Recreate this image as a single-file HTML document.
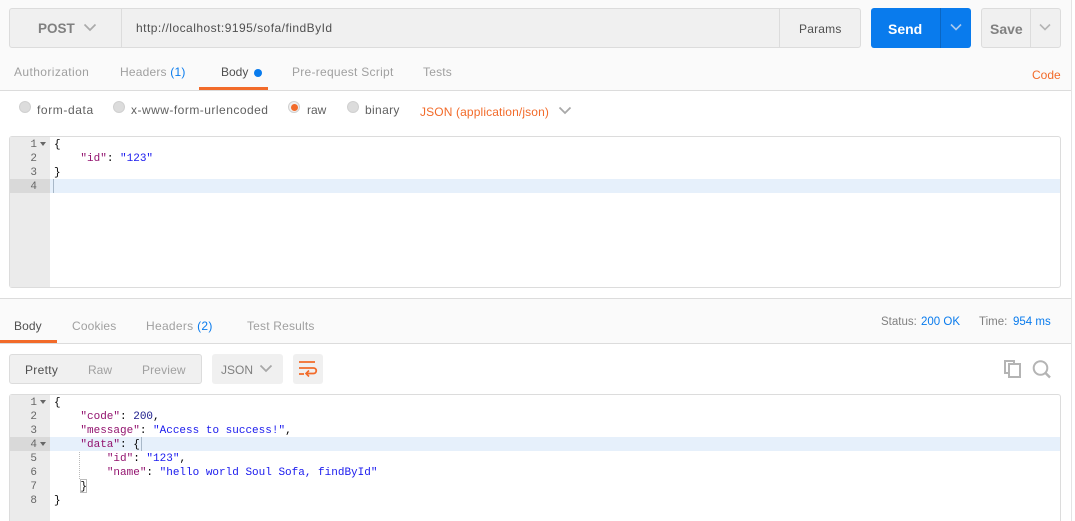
<!DOCTYPE html>
<html><head><meta charset="utf-8"><style>
html,body{margin:0;padding:0;background:#fff}
#p{position:relative;width:1075px;height:521px;overflow:hidden;background:#fff;font-family:"Liberation Sans",sans-serif;font-size:12px;color:#808080}
#p div,#p span.a,#p svg{position:absolute}
.t{white-space:nowrap;line-height:16px}
.m{font-family:"Liberation Mono",monospace;font-size:11px;line-height:14px;white-space:pre;color:#000}
.k{color:#92126e}.s{color:#1a1aee}.n{color:#1a1a8a}
.ln{font-family:"Liberation Mono",monospace;font-size:11px;line-height:14px;color:#666;width:27px;text-align:right;left:10px}
.b{color:#097bed}
.r{width:12px;height:12px;border-radius:50%;background:#dcdcdc;border:1px solid #d0d0d0;box-sizing:border-box}
</style></head><body><div id="p">
<div style="left:0;top:0;width:1071px;height:91px;background:#fafafa"></div>
<div style="left:0;top:90px;width:1071px;height:1px;background:#dcdcdc"></div>
<div style="left:1071px;top:0;width:1px;height:521px;background:#e4e4e4"></div>

<div style="left:9px;top:8px;width:852px;height:40px;background:#f0f0f0;border:1px solid #dcdcdc;border-radius:3px;box-sizing:border-box"></div>
<div style="left:121px;top:9px;width:1px;height:38px;background:#dcdcdc"></div>
<div style="left:779px;top:9px;width:1px;height:38px;background:#dcdcdc"></div>
<div class="t" style="left:38px;top:21px;font-size:13.5px;font-weight:bold;color:#808080">POST</div>
<svg style="left:83px;top:23px" width="14" height="10"><path d="M1.5 1.5L7 7L12.5 1.5" fill="none" stroke="#aaa" stroke-width="1.7"/></svg>
<div class="t" style="left:136px;top:20px;color:#505050;letter-spacing:.47px">http://localhost:9195/sofa/findById</div>
<div class="t" style="left:799px;top:21px;color:#505050;letter-spacing:.2px">Params</div>

<div style="left:871px;top:8px;width:100px;height:40px;background:#097bed;border-radius:3px"></div>
<div style="left:940px;top:8px;width:1px;height:40px;background:#0a66c2"></div>
<div class="t" style="left:888px;top:21px;font-size:14px;font-weight:bold;color:#fff">Send</div>
<svg style="left:949px;top:23px" width="14" height="9"><path d="M2 1.5L7 6.5L12 1.5" fill="none" stroke="#a9c9ee" stroke-width="1.6"/></svg>
<div style="left:981px;top:8px;width:80px;height:40px;background:#f0f0f0;border:1px solid #dcdcdc;border-radius:3px;box-sizing:border-box"></div>
<div style="left:1030px;top:9px;width:1px;height:38px;background:#dcdcdc"></div>
<div class="t" style="left:990px;top:21px;font-size:14px;font-weight:bold;color:#808080">Save</div>
<svg style="left:1038px;top:23px" width="14" height="9"><path d="M2 1.5L7 6.5L12 1.5" fill="none" stroke="#b4b4b4" stroke-width="1.6"/></svg>

<div class="t" style="left:14px;top:64px;color:#a0a0a0;letter-spacing:.4px">Authorization</div>
<div class="t" style="left:120px;top:64px;color:#a0a0a0;letter-spacing:.2px">Headers <span style="color:#097bed">(1)</span></div>
<div class="t" style="left:221px;top:64px;color:#505050">Body</div>
<div style="left:254px;top:69px;width:8px;height:8px;border-radius:50%;background:#097bed"></div>
<div style="left:199px;top:87px;width:69px;height:3px;background:#f26b2a"></div>
<div class="t" style="left:292px;top:64px;color:#a0a0a0;letter-spacing:.27px">Pre-request Script</div>
<div class="t" style="left:423px;top:64px;color:#a0a0a0;letter-spacing:.2px">Tests</div>
<div class="t" style="left:1032px;top:67px;color:#f26b2a">Code</div>

<div class="r" style="left:19px;top:101px"></div>
<div class="t" style="left:37px;top:102px;color:#606060;letter-spacing:.6px">form-data</div>
<div class="r" style="left:113px;top:101px"></div>
<div class="t" style="left:131px;top:102px;color:#606060;letter-spacing:.48px">x-www-form-urlencoded</div>
<div class="r" style="left:288px;top:101px;background:#f0f0f0"></div>
<div style="left:291px;top:104px;width:7px;height:7px;border-radius:50%;background:#f26b2a"></div>
<div class="t" style="left:307px;top:102px;color:#606060">raw</div>
<div class="r" style="left:347px;top:101px"></div>
<div class="t" style="left:365px;top:102px;color:#606060;letter-spacing:.35px">binary</div>
<div class="t" style="left:420px;top:104px;color:#f26b2a;letter-spacing:.13px">JSON (application/json)</div>
<svg style="left:558px;top:106px" width="14" height="10"><path d="M1.5 1.5L7 7L12.5 1.5" fill="none" stroke="#a8a8a8" stroke-width="1.8"/></svg>

<div style="left:9px;top:136px;width:1052px;height:152px;border:1px solid #dcdcdc;border-radius:3px;box-sizing:border-box;background:#fff"></div>
<div style="left:10px;top:137px;width:40px;height:150px;background:#ebebeb"></div>
<div style="left:50px;top:179px;width:1010px;height:14px;background:#e6f0fb"></div>
<div style="left:10px;top:179px;width:40px;height:14px;background:#d9d9d9"></div>
<div style="left:53px;top:179px;width:1px;height:14px;background:#a8b8c8"></div>
<div class="ln" style="top:138px">1<br>2<br>3<br>4</div>
<svg style="left:40px;top:142px" width="7" height="5"><path d="M0 0H6L3 4Z" fill="#666"/></svg>
<div class="m" style="left:54px;top:138px">{
    <span class="k">"id"</span>: <span class="s">"123"</span>
}</div>

<div style="left:0;top:298px;width:1071px;height:1px;background:#dcdcdc"></div>
<div style="left:0;top:299px;width:1071px;height:44px;background:#fafafa"></div>
<div style="left:0;top:343px;width:1071px;height:1px;background:#dcdcdc"></div>
<div style="left:0;top:340px;width:57px;height:3px;background:#f26b2a"></div>
<div class="t" style="left:14px;top:318px;color:#505050;letter-spacing:.1px">Body</div>
<div class="t" style="left:72px;top:318px;color:#a0a0a0;letter-spacing:.15px">Cookies</div>
<div class="t" style="left:146px;top:318px;color:#a0a0a0;letter-spacing:.3px">Headers <span style="color:#097bed">(2)</span></div>
<div class="t" style="left:247px;top:318px;color:#a0a0a0;letter-spacing:.18px">Test Results</div>
<div class="t" style="left:881px;top:314px;font-size:11.5px;color:#808080">Status:</div>
<div class="t" style="left:921px;top:314px;font-size:11.5px;color:#097bed">200 OK</div>
<div class="t" style="left:979px;top:314px;font-size:11.5px;color:#808080">Time:</div>
<div class="t" style="left:1013px;top:314px;font-size:11.5px;color:#097bed">954 ms</div>

<div style="left:9px;top:354px;width:193px;height:30px;background:#f0f0f0;border:1px solid #dcdcdc;border-radius:3px;box-sizing:border-box"></div>
<div class="t" style="left:25px;top:362px;color:#505050;letter-spacing:.3px">Pretty</div>
<div class="t" style="left:88px;top:362px;color:#a0a0a0">Raw</div>
<div class="t" style="left:142px;top:362px;color:#a0a0a0;letter-spacing:.15px">Preview</div>
<div style="left:212px;top:354px;width:71px;height:30px;background:#f0f0f0;border-radius:3px"></div>
<div class="t" style="left:221px;top:362px;color:#808080">JSON</div>
<svg style="left:259px;top:364px" width="14" height="10"><path d="M1.5 1.5L7 7L12.5 1.5" fill="none" stroke="#a8a8a8" stroke-width="1.8"/></svg>
<div style="left:293px;top:354px;width:30px;height:30px;background:#f0f0f0;border-radius:3px"></div>
<svg style="left:298px;top:360px" width="20" height="18"><path d="M1 2H17M1 8H15.5A2.7 2.7 0 0 1 15.5 13.5H9M1 14H6" fill="none" stroke="#f26b2a" stroke-width="1.8"/><path d="M11 10.5L8 13.5L11 16.5" fill="none" stroke="#f26b2a" stroke-width="1.6"/></svg>
<svg style="left:1003px;top:359px" width="18" height="19"><path d="M6 14H2V2H11V5" fill="none" stroke="#b4b4b4" stroke-width="2"/><rect x="6" y="5" width="11" height="13" fill="none" stroke="#b4b4b4" stroke-width="2"/></svg>
<svg style="left:1032px;top:359px" width="20" height="20"><circle cx="8.5" cy="9" r="6.8" fill="none" stroke="#b4b4b4" stroke-width="2"/><path d="M13.5 14L18 18.5" stroke="#b4b4b4" stroke-width="2.4"/></svg>

<div style="left:9px;top:394px;width:1052px;height:127px;border:1px solid #dcdcdc;border-bottom:0;border-radius:3px 3px 0 0;box-sizing:border-box;background:#fff"></div>
<div style="left:10px;top:395px;width:40px;height:126px;background:#ebebeb"></div>
<div style="left:50px;top:437px;width:1010px;height:14px;background:#e6f0fb"></div>
<div style="left:10px;top:437px;width:40px;height:14px;background:#d9d9d9"></div>
<div class="ln" style="top:396px">1<br>2<br>3<br>4<br>5<br>6<br>7<br>8</div>
<svg style="left:40px;top:400px" width="7" height="5"><path d="M0 0H6L3 4Z" fill="#666"/></svg>
<svg style="left:40px;top:442px" width="7" height="5"><path d="M0 0H6L3 4Z" fill="#666"/></svg>
<div style="left:79px;top:452px;width:0;height:27px;border-left:1px dotted #bbb"></div>
<div style="left:80px;top:479px;width:7px;height:14px;border:1px solid #bbb;box-sizing:border-box"></div>
<div style="left:141px;top:437px;width:1px;height:14px;background:#a8b8c8"></div>
<div class="m" style="left:54px;top:396px">{
    <span class="k">"code"</span>: <span class="n">200</span>,
    <span class="k">"message"</span>: <span class="s">"Access to success!"</span>,
    <span class="k">"data"</span>: {
        <span class="k">"id"</span>: <span class="s">"123"</span>,
        <span class="k">"name"</span>: <span class="s">"hello world Soul Sofa, findById"</span>
    }
}</div>
</div></body></html>
